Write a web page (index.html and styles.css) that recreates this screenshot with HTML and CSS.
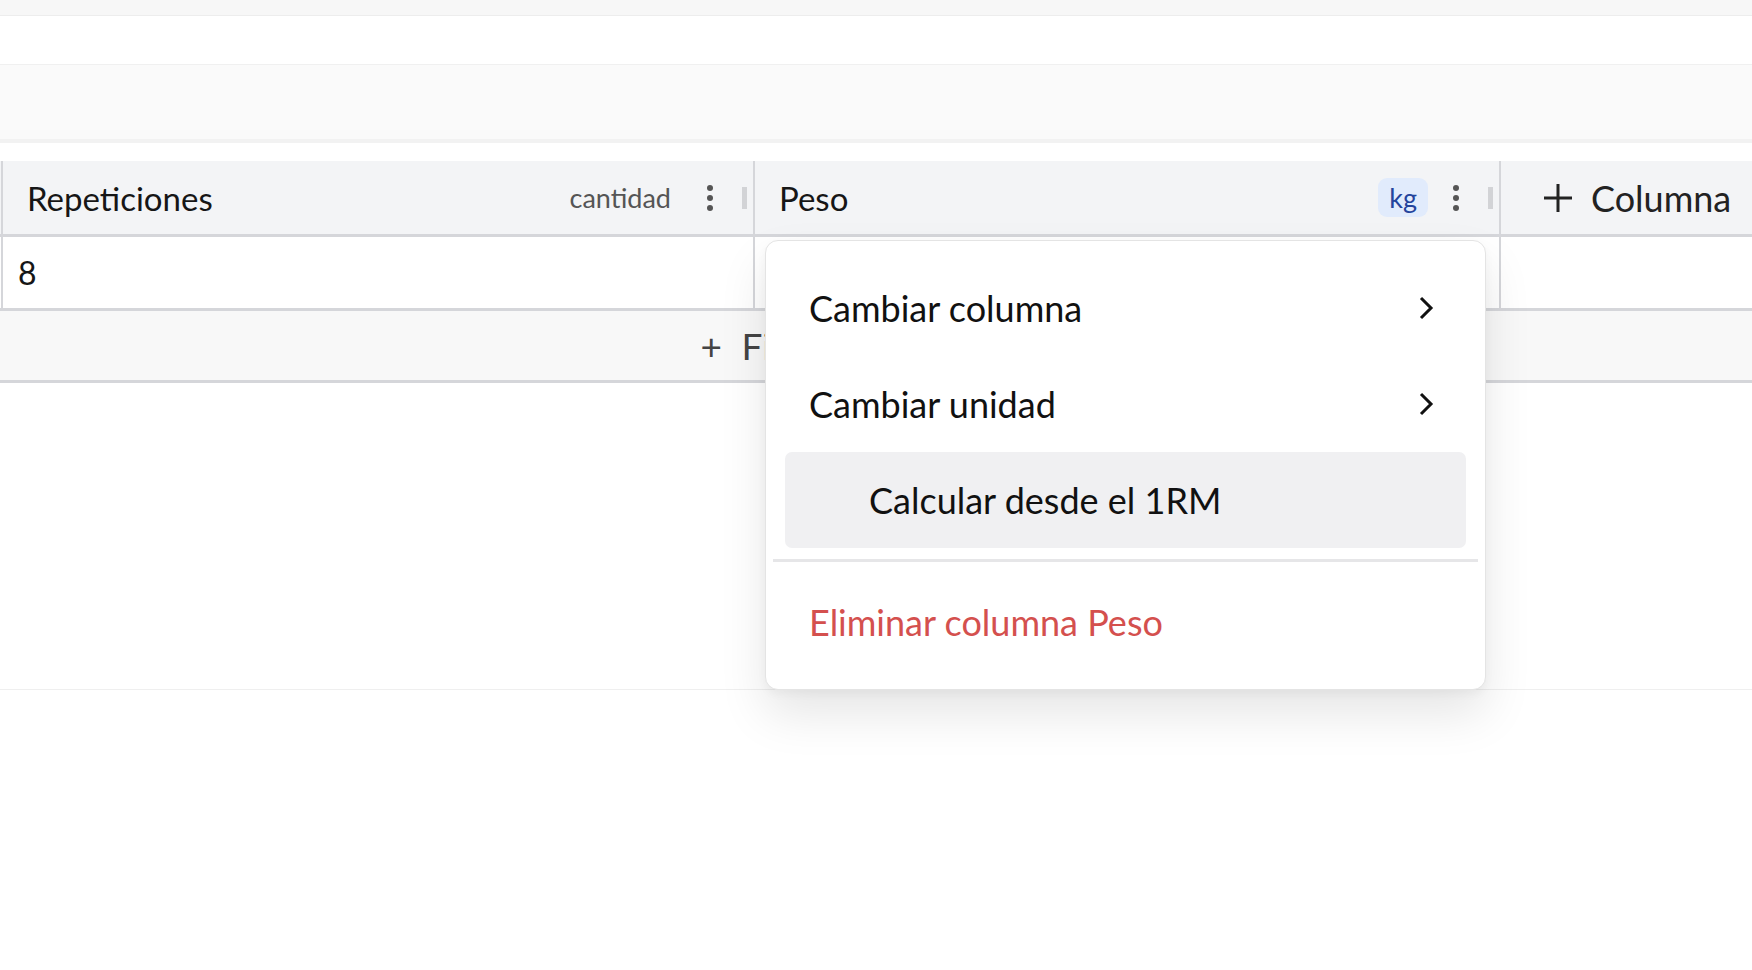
FILE: index.html
```html
<!DOCTYPE html>
<html lang="es">

<head>
  <meta charset="UTF-8">
  <meta name="viewport" content="width=device-width, initial-scale=1.0">
  <title>Rutina</title>
  <link rel="stylesheet" href="styles.css">
</head>

<body>
  <div class="app">
    <div class="statusbar"></div>
    <div class="titlebar"></div>
    <div class="toolbar"></div>

    <div class="sheet">
      <div class="row head">
        <div class="cell col-reps">
          <span class="col-title">Repeticiones</span>
          <span class="unit">cantidad</span>
          <button class="kebab"><i></i><i></i><i></i></button>
          <span class="grip"></span>
        </div>
        <div class="cell col-weight">
          <span class="col-title">Peso</span>
          <span class="unit active">kg</span>
          <button class="kebab"><i></i><i></i><i></i></button>
          <span class="grip"></span>
        </div>
        <div class="cell col-add">
          <svg width="32" height="32" viewBox="0 0 32 32">
            <path d="M16 2v28M2 16h28" stroke="#222" stroke-width="3" fill="none" />
          </svg>
          <span>Columna</span>
        </div>
      </div>

      <div class="row data">
        <div class="cell col-reps">8</div>
        <div class="cell col-weight"></div>
        <div class="cell col-add"></div>
      </div>

      <div class="add-row">
        <span>+ Fila</span>
      </div>

      <div class="sheet-foot"></div>

      <!-- menú de la columna Peso -->
      <div class="menu">
        <div class="menu-item">
          <span>Cambiar columna</span>
          <svg class="chev" width="16" height="26" viewBox="0 0 16 26">
            <path d="M3 3l10 10L3 23" stroke="#111" stroke-width="3" fill="none" />
          </svg>
        </div>
        <div class="menu-item">
          <span>Cambiar unidad</span>
          <svg class="chev" width="16" height="26" viewBox="0 0 16 26">
            <path d="M3 3l10 10L3 23" stroke="#111" stroke-width="3" fill="none" />
          </svg>
        </div>
        <div class="menu-item selected">
          <span class="indent">Calcular desde el 1RM</span>
        </div>
        <div class="menu-sep"></div>
        <div class="menu-item danger">
          <span>Eliminar columna Peso</span>
        </div>
      </div>
    </div>
  </div>
</body>

</html>
```

FILE: styles.css
```css
* {
  margin: 0;
  padding: 0;
  box-sizing: border-box;
}

body {
  font-family: Lato, "Noto Sans", sans-serif;
  color: #161616;
  background: #fff;
}

.app {
  width: 1752px;
  height: 970px;
  overflow: hidden;
}

.statusbar {
  height: 16px;
  background: #f7f7f7;
  border-bottom: 1px solid #ededed;
}

.titlebar {
  height: 49px;
  border-bottom: 1px solid #f0f0f0;
}

.toolbar {
  height: 78px;
  background: #fafafa;
  border-bottom: 4px solid #f2f2f2;
}

.sheet {
  position: relative;
  margin-top: 18px;
}

.row {
  display: flex;
  border-bottom: 3px solid #d5d6da;
  padding-left: 1px;
}

.row .cell {
  display: flex;
  align-items: center;
  border-left: 2px solid #d5d6da;
}

.col-reps {
  width: 752px;
}

.col-weight {
  width: 746px;
}

.col-add {
  flex: 1;
}

.head {
  height: 76px;
  background: #f3f4f6;
}

.head .cell {
  padding: 0 6px 0 24px;
  font-size: 33px;
}

.col-title {
  flex: 1;
}

.unit {
  font-size: 27px;
  color: #555;
  padding: 3px 11px;
  border-radius: 9px;
  margin-right: 8px;
}

.unit.active {
  background: #e1ebfc;
  color: #24449c;
}

.kebab {
  width: 40px;
  height: 40px;
  border: none;
  background: none;
  display: flex;
  flex-direction: column;
  align-items: center;
  justify-content: center;
  gap: 4px;
}

.kebab i {
  display: block;
  width: 6px;
  height: 6px;
  border-radius: 50%;
  background: #555;
}

.grip {
  width: 5px;
  height: 22px;
  background: #d2d3d6;
  margin-left: 12px;
}

.head .col-add {
  padding-left: 41px;
  gap: 17px;
  font-size: 36px;
  color: #222;
}

.data {
  height: 74px;
}

.data .col-reps {
  padding-left: 15px;
  font-size: 32px;
}

.add-row {
  height: 72px;
  background: #f8f8f8;
  border-bottom: 3px solid #d5d6da;
  display: flex;
  align-items: center;
  justify-content: center;
  padding-right: 253px;
  font-size: 37px;
  color: #444;
  word-spacing: 10px;
}

.sheet-foot {
  height: 307px;
  border-bottom: 1px solid #efefef;
}

.menu {
  position: absolute;
  left: 765px;
  top: 79px;
  width: 721px;
  padding: 19px;
  background: #fff;
  border: 1px solid #e4e4e4;
  border-radius: 13px;
  box-shadow: 0 24px 48px rgba(0, 0, 0, 0.1), 0 4px 10px rgba(0, 0, 0, 0.04);
}

.menu-item {
  height: 96px;
  display: flex;
  align-items: center;
  justify-content: space-between;
  padding: 0 32px 0 24px;
  font-size: 36px;
  color: #111;
  border-radius: 7px;
}

.menu-item.selected {
  background: #f0f0f2;
}

.menu-item .indent {
  padding-left: 60px;
}

.menu-sep {
  height: 3px;
  background: #e6e6e8;
  margin: 11px -12px 12px;
}

.menu-item.danger {
  color: #d4504e;
}
```
